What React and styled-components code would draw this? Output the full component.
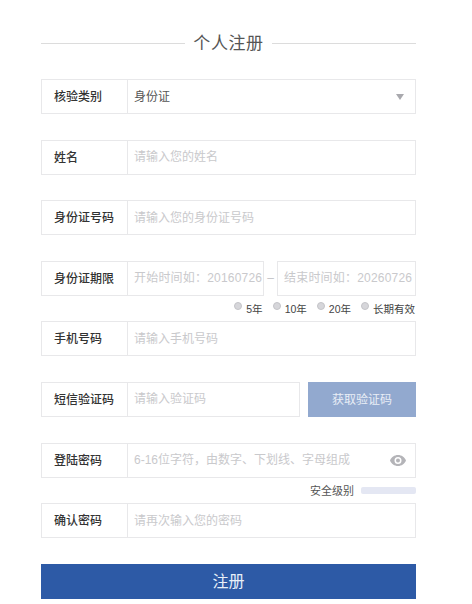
import React from "react";
import styled, { createGlobalStyle } from "styled-components";

const GlobalStyle = createGlobalStyle`
  html, body {
    margin: 0;
    padding: 0;
    background: #fff;
    font-family: "Liberation Sans", "Noto Sans CJK SC", sans-serif;
  }
`;

const Page = styled.div`
  width: 472px;
  height: 604px;
  box-sizing: border-box;
  padding: 30px 56px 0 41px;
  overflow: hidden;
`;

const Title = styled.div`
  display: flex;
  align-items: center;
  gap: 8px;
  height: 26px;
  margin-bottom: 23px;
  color: #555;
  font-size: 17px;
  letter-spacing: 0.6px;

  &::before,
  &::after {
    content: "";
    flex: 1;
    height: 1px;
    background: #dcdcdc;
  }
`;

const TitleText = styled.span`
  margin-top: -3px;
`;

const Form = styled.form`
  display: flex;
  flex-direction: column;
`;

const Row = styled.div`
  display: flex;
  align-items: stretch;
  margin-bottom: ${(p) => p.$after ?? 25.6}px;
`;

const Field = styled.div`
  flex: 1;
  min-width: 0;
  display: flex;
  align-items: center;
  height: 35px;
  box-sizing: border-box;
  border: 1px solid #e8e8ea;
  background: #fff;
`;

const Label = styled.label`
  flex: 0 0 86px;
  box-sizing: border-box;
  height: 100%;
  display: flex;
  align-items: center;
  padding: 0 0 2px 12px;
  border-right: 1px solid #e8e8ea;
  color: #333;
  font-size: 12px;
  font-weight: 500;
  white-space: nowrap;
`;

const Input = styled.input`
  flex: 1;
  min-width: 0;
  height: 100%;
  box-sizing: border-box;
  padding: 0 0 0 6px;
  border: 0;
  outline: 0;
  background: transparent;
  font-family: inherit;
  font-size: 12px;
  letter-spacing: ${(p) => p.$spaced ? "0.2px" : "normal"};

  &::placeholder {
    color: #c9c9cc;
    opacity: 1;
  }
`;

const SelectValue = styled.div`
  flex: 1;
  padding: 0 0 2px 6px;
  color: #555;
  font-size: 12px;
`;

const Caret = styled.span`
  width: 0;
  height: 0;
  margin-right: 11px;
  border-left: 4px solid transparent;
  border-right: 4px solid transparent;
  border-top: 6px solid #a9a9ae;
`;

const Dash = styled.span`
  flex: 0 0 13px;
  text-align: center;
  color: #c4c4c8;
  font-size: 12px;
  align-self: center;
`;

const DateBox = styled(Field)`
  flex: ${(p) => p.$basis ? `0 0 ${p.$basis}px` : 1};
`;

const RadioRow = styled.div`
  display: flex;
  justify-content: flex-end;
  align-items: center;
  gap: 10px;
  height: 25.6px;
  padding-right: 1px;
  color: #444;
  font-size: 10.5px;
`;

const RadioItem = styled.span`
  display: flex;
  align-items: center;
  gap: 4px;
`;

const RadioDot = styled.i`
  width: 8px;
  height: 8px;
  margin-top: -6px;
  border-radius: 50%;
  box-sizing: border-box;
  border: 1px solid #c4c4c8;
  background: #d6d6da;
`;

const CodeButton = styled.button`
  flex: 0 0 108px;
  margin-left: 8px;
  height: 35px;
  padding: 0 0 2px;
  border: 0;
  background: #92a9cf;
  color: #e9eef6;
  font-family: inherit;
  font-size: 12px;
`;

const EyeIcon = styled.svg`
  flex: 0 0 16px;
  margin-right: 9px;
`;

const Strength = styled.div`
  display: flex;
  justify-content: flex-end;
  align-items: center;
  gap: 7px;
  height: 25.6px;
  color: #555;
  font-size: 11px;
`;

const StrengthBar = styled.span`
  width: 55px;
  height: 7px;
  border-radius: 2px;
  background: #e4e7f3;
`;

const Submit = styled.button`
  display: block;
  width: 100%;
  height: 35px;
  padding: 0 0 3px;
  border: 0;
  background: #2d5aa6;
  color: #e8f0f8;
  font-family: inherit;
  font-size: 16px;
`;

const radios = ["5年", "10年", "20年", "长期有效"];

export default function App() {
  return (
    <Page>
      <GlobalStyle />
      <Title>
        <TitleText>个人注册</TitleText>
      </Title>
      <Form onSubmit={(e) => e.preventDefault()}>
        <Row>
          <Field>
            <Label>核验类别</Label>
            <SelectValue>身份证</SelectValue>
            <Caret />
          </Field>
        </Row>
        <Row>
          <Field>
            <Label>姓名</Label>
            <Input placeholder="请输入您的姓名" />
          </Field>
        </Row>
        <Row>
          <Field>
            <Label>身份证号码</Label>
            <Input placeholder="请输入您的身份证号码" />
          </Field>
        </Row>
        <Row $after={0}>
          <DateBox>
            <Label>身份证期限</Label>
            <Input $spaced placeholder="开始时间如：20160726" />
          </DateBox>
          <Dash>–</Dash>
          <DateBox $basis={139}>
            <Input $spaced placeholder="结束时间如：20260726" />
          </DateBox>
        </Row>
        <RadioRow>
          {radios.map((r) => (
            <RadioItem key={r}>
              <RadioDot />
              {r}
            </RadioItem>
          ))}
        </RadioRow>
        <Row>
          <Field>
            <Label>手机号码</Label>
            <Input placeholder="请输入手机号码" />
          </Field>
        </Row>
        <Row>
          <Field>
            <Label>短信验证码</Label>
            <Input placeholder="请输入验证码" />
          </Field>
          <CodeButton type="button">获取验证码</CodeButton>
        </Row>
        <Row $after={0}>
          <Field>
            <Label>登陆密码</Label>
            <Input placeholder="6-16位字符，由数字、下划线、字母组成" />
            <EyeIcon width="16" height="11" viewBox="0 0 16 11">
              <path
                fill="#b4b4b8"
                fillRule="evenodd"
                d="M8 0C4.4 0 1.4 2.2 0 5.5 1.4 8.8 4.4 11 8 11s6.600-2.200 8-5.500C14.600 2.200 11.600 0 8 0zm0 9a3.500 3.500 0 1 1 0-7 3.500 3.500 0 0 1 0 7zm0-5.500a2 2 0 1 0 0 4 2 2 0 0 0 0-4z"
              />
            </EyeIcon>
          </Field>
        </Row>
        <Strength>
          安全级别
          <StrengthBar />
        </Strength>
        <Row>
          <Field>
            <Label>确认密码</Label>
            <Input placeholder="请再次输入您的密码" />
          </Field>
        </Row>
        <Submit type="submit">注册</Submit>
      </Form>
    </Page>
  );
}
